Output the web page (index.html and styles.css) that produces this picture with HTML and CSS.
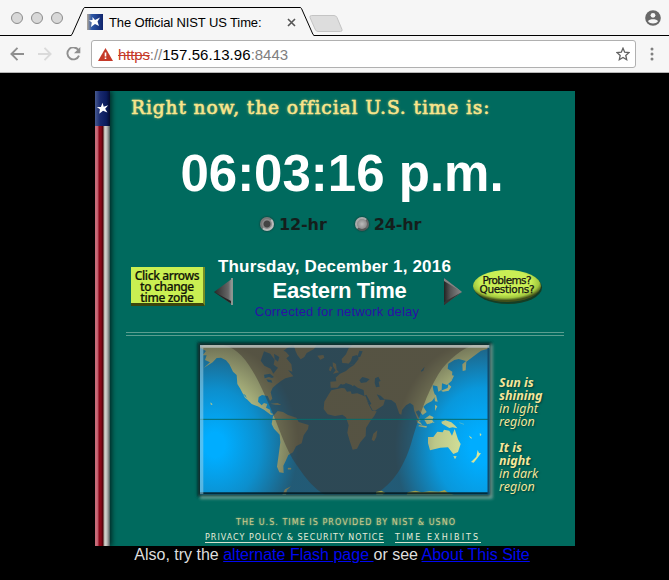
FILE: index.html
```html
<!DOCTYPE html>
<html lang="en">
<head>
<meta charset="utf-8">
<title>The Official NIST US Time:</title>
<link rel="stylesheet" href="styles.css">
</head>
<body>
<header class="browser">
  <div class="tabstrip">
    <div class="lights"><i></i><i></i><i></i></div>
    <div class="tab">
      <svg class="tab-shape" width="243" height="36" viewBox="0 0 243 36"><path d="M0 35.500L1 35L12.500 8.500Q13 7.500 14 7.500H229Q230 7.500 230.500 8.500L242 35L243 35.500V36H0Z" fill="#f6f6f6"/><path d="M0 35.300L1 34.500L12.500 8.500Q13 7.500 14 7.500H229Q230 7.500 230.500 8.500L242 34.500L243 35.300" fill="none" stroke="#000"/></svg>
      <div class="tab-content">
        <svg class="favicon" width="16" height="16" viewBox="0 0 16 16"><defs><linearGradient id="fav"><stop offset="0" stop-color="#b3a897"/><stop offset=".3" stop-color="#2c57a8"/><stop offset="1" stop-color="#10256d"/></linearGradient></defs><path fill="url(#fav)" d="M0 0h16v16H0z"/><path fill="#fff" d="M5.500 3l2.500 3 5-2.500-2.500 4L12 12l-4-2-4 3 .7-4.500L2 6.300l3.500-.2z"/></svg>
        <span class="tab-title">The Official NIST US Time:</span>
        <svg class="close" width="9" height="9" viewBox="0 0 9 9"><path d="M1 1l7 7M8 1L1 8" stroke="#555" stroke-width="1.600"/></svg>
      </div>
    </div>
    <svg class="newtab" width="34" height="17" viewBox="0 0 34 17"><path d="M2.500.5H25Q27 .5 28 2.500L33 14.500Q33.500 16.500 31.500 16.500H9Q7 16.500 6 14L1 2.500Q.5.500 2.500.5Z" fill="#ddd" stroke="#c4c4c4"/></svg>
    <svg class="person" width="16" height="16" viewBox="0 0 16 16"><circle cx="8" cy="8" r="7.800" fill="#686868"/><circle cx="8" cy="5.300" r="2.400" fill="#f6f6f6"/><path d="M3 11.200C4.500 8.700 11.500 8.700 13 11.200 11 14.200 5 14.200 3 11.200" fill="#f6f6f6"/></svg>
  </div>
  <div class="toolbar">
    <svg width="14" height="14" viewBox="0 0 14 14" fill="none" stroke="#8f8f8f" stroke-width="1.900"><path d="M14 7H1.500M7.500.8L1.400 7l6.100 6.200"/></svg>
    <svg width="14" height="14" viewBox="0 0 14 14" fill="none" stroke="#dadada" stroke-width="1.900"><path d="M0 7h12.500M6.500.8L12.600 7l-6.100 6.200"/></svg>
    <svg width="15" height="14" viewBox="0 0 15 14"><path d="M12.500 3.200A6 6 0 1 0 13 8.600" fill="none" stroke="#8f8f8f" stroke-width="1.900"/><path d="M14.300 0v6.300H8z" fill="#8f8f8f"/></svg>
    <div class="address">
      <svg class="warn" width="15" height="13" viewBox="0 0 15 13"><path d="M7.500 0L15 13H0z" fill="#c53929"/><path d="M6.700 4.500h1.600v4H6.700zM6.700 9.500h1.600V11H6.700z" fill="#fff"/></svg>
      <span class="url"><s>https</s>://<b>157.56.13.96</b>:8443</span>
      <svg class="star" width="14" height="14" viewBox="0 0 14 14"><path d="M7 1.200l1.700 4 4.300.4-3.200 2.800.9 4.300L7 10.500l-3.700 2.200.9-4.300L1 5.600l4.300-.4z" fill="none" stroke="#626262" stroke-width="1.300"/></svg>
    </div>
    <svg class="dots" width="4" height="14" viewBox="0 0 4 14" fill="#808080"><circle cx="2" cy="2" r="1.500"/><circle cx="2" cy="7" r="1.500"/><circle cx="2" cy="12" r="1.500"/></svg>
  </div>
</header>

<main class="panel">
  <div class="flag"><div class="canton"><svg width="13" height="13" viewBox="0 0 16 16"><path fill="#fff" d="M8 1l1.500 4.800L15 4l-3.700 4.200L14 13l-5.300-2.200L4 14.500l.8-5.500L1 6l5 .2z"/></svg></div><div class="stripes"></div></div>
  <div class="content">
    <h1>Right now, the official U.S. time is:</h1>
    <div class="clock">06:03:16 p.m.</div>
    <div class="modes">
      <span class="mode"><i class="radio on"></i>12-hr</span>
      <span class="mode"><i class="radio"></i>24-hr</span>
    </div>
    <div class="zone">
      <div class="hint">Click arrows<br>to change<br>time zone</div>
      <svg class="arrow prev" width="21" height="29" viewBox="0 0 21 29"><defs><linearGradient id="ar1"><stop offset="0" stop-color="#282828"/><stop offset=".75" stop-color="#666"/><stop offset="1" stop-color="#aaa"/></linearGradient></defs><path d="M20 1L1 15l19 13z" fill="url(#ar1)"/><path d="M1 15l19 13v-3z" fill="#242424"/><path d="M19 1v27" stroke="#8c9590" stroke-width="2"/></svg>
      <div class="when"><div class="date">Thursday, December 1, 2016</div><div class="tz">Eastern Time</div><div class="delay">Corrected for network delay</div></div>
      <svg class="arrow next" width="21" height="29" viewBox="0 0 21 29"><defs><linearGradient id="ar2"><stop offset="0" stop-color="#222"/><stop offset=".35" stop-color="#555"/><stop offset="1" stop-color="#8b8b8b"/></linearGradient></defs><path d="M1 1l18 14L1 28z" fill="url(#ar2)"/><path d="M1 1l18 14L1 4z" fill="#858585"/><path d="M1 28l18-13L1 25z" fill="#333"/></svg>
      <svg class="help" width="72" height="38" viewBox="0 0 72 38"><defs><radialGradient id="pill" cx=".48" cy=".38" r=".57"><stop offset=".65" stop-color="#c9ef55"/><stop offset=".86" stop-color="#a2c83e"/><stop offset="1" stop-color="#42501a"/></radialGradient></defs><ellipse cx="36" cy="18.500" rx="34" ry="16.500" fill="#153d24"/><ellipse cx="35" cy="17" rx="34" ry="16" fill="url(#pill)"/><g class="help-text"><text x="35" y="15" textLength="49">Problems?</text><text x="35" y="24" textLength="55">Questions?</text></g></svg>
    </div>
    <hr>
    <div class="daylight">
      <svg class="map" width="310" height="170" viewBox="0 0 930 510">
        <defs>
          <clipPath id="frame"><path d="M30 30H898V478H30z"/></clipPath>
          <filter id="edge" x="-.1" y="-.1" width="1.200" height="1.200"><feGaussianBlur stdDeviation="4"/></filter>
          <radialGradient id="west" gradientUnits="userSpaceOnUse" cx="0" cy="0" r="1" gradientTransform="translate(75 330) scale(250 305)"><stop offset=".12" stop-color="#34302f" stop-opacity="0"/><stop offset=".55" stop-color="#34302f" stop-opacity=".24"/><stop offset="1" stop-color="#34302f" stop-opacity=".66"/></radialGradient>
          <radialGradient id="east" gradientUnits="userSpaceOnUse" cx="0" cy="0" r="1" gradientTransform="translate(880 335) scale(265 320)"><stop offset=".15" stop-color="#34302f" stop-opacity="0"/><stop offset=".55" stop-color="#34302f" stop-opacity=".17"/><stop offset="1" stop-color="#34302f" stop-opacity=".66"/></radialGradient>
          <path id="night" d="M100 30C165 42 205 135 240 215C268 280 285 340 320 390C350 435 375 462 405 480H548C600 458 640 400 662 330C685 252 710 175 745 118C775 70 820 40 850 30Z"/>
        </defs>
        <path d="M22 22H906V485H22z" fill="#082a29" filter="url(#edge)"/>
        <path d="M30 487H904V28" fill="none" stroke="#8ab5aa" stroke-width="8" opacity=".85" filter="url(#edge)"/>
        <g clip-path="url(#frame)">
          <path d="M30 30H900V480H30z" fill="#00adff"/>
          <g fill="#d8e69b">
            <path d="M30 38L42 30H380L372 42L350 54L343 66L332 73L322 60L315 44L298 38L285 48L298 62L289 70L304 88L307 110L294 105L310 124L286 130L274 137L260 148L248 158L242 172L247 191L240 198L233 183L216 180L206 186L204 200L215 211L222 204L232 207L228 218L240 224L242 234L252 238L243 240L222 224L203 214L185 207L173 195L166 180L159 176L178 199L165 188L150 160L142 147L140 120L129 110L118 88L108 76L93 68L80 69L68 82L41 99L60 82L45 75L50 61L38 61L48 48Z"/>
            <path d="M249 244L263 228L279 231L294 240L319 248L326 261L356 270L354 282L341 301L335 325L318 334L309 352L295 360L287 378L280 392L281 414L268 412L261 395L266 359L271 322L269 299L252 281L245 267Z"/>
            <path d="M424 166L455 159L479 161L485 177L502 175L517 181L527 185L535 207L546 227L560 229L553 242L541 258L528 279L527 303L511 322L501 341L488 344L479 317L472 293L476 271L468 247L457 239L435 243L413 238L401 222L403 200L415 180ZM550 296L562 286L559 306L552 319L545 314Z"/>
            <path d="M422 158L421 140L439 139L437 128L450 116L468 108L478 99L492 90L470 85L457 84L455 72L468 58L476 40L488 30H900V40L873 47L848 66L829 80L827 106L818 108L817 88L828 78L806 72L793 75L775 86L773 101L787 110L785 137L771 150L756 145L755 164L745 170L742 154L728 151L730 166L736 184L726 198L709 207L700 215L710 231L698 240L686 226L677 230L692 259L684 255L673 229L670 211L660 204L648 211L636 225L634 239L628 236L617 205L604 195L583 193L572 182L560 178L570 195L585 194L580 211L555 227L548 226L533 199L523 181L521 166L492 162L485 150L465 143L477 164L466 157L453 146L442 158Z"/>
            <path d="M428 82l10 5 2 17 7 8-18 4 8-10-8-12zM420 94l7 3-5 12-5-3zM382 62l18-2 3 8-12 6zM242 206l21-2 11 6-18-1zM269 39l15 3-10 9z"/>
            <path d="M714 306L730 306L742 290L758 292L762 284L778 287L786 302L794 282L804 313L812 327L804 351L790 357L774 337L751 338L720 346L714 325ZM790 363l10 1-5 9zM863 345l4 9 6 1-10 13-12 15-8-2 16-16zM754 260l12-4 18 6 12 10 6 8-14-3-10 2-22-13zM702 253l17-12 11 5-4 18-15 4zM678 251l14 12 5 8-15-8zM687 270l24 4-2 4-24-4zM719 249l12-2-6 8 9 9-13-4-4 9zM732 178l6 2 5 20-8-1zM735 209l7 5-7 14zM784 120l8 2-8 17zM775 147l9 8-8 12-17 3-6-3 20-8z"/>
            <path d="M277 479l8-16 18-9-12 11-3 14z"/>
            <path d="M62 203l5 5-4 1zM294 399h9v4h-9zM808 263l14 5M838 303l8 7-5-1zM870 295l4 5-4 2zM718 260l2 2z" stroke="#d8e69b"/>
          </g>
          <g fill="#00adff">
            <path d="M222 49l19 7 13 18-3 15 13 9-14 18-8-15-19-9-11-15zM222 119l18-3 12 10-6 3-9-3-13 4zM229 133l15 2 3 8-13-2zM310 30l6 14-14 8-22-4 12-10zM252 56l16 10-4 14-10-8zM487 64l14-4 5 12-14 18-17-3 8-10zM508 47l10 2-7 16-10 4zM508 136l9-10 12 3 10 4-10 9-16 2zM555 130l10-5 7 13-6 2 3 15-11 2-4-13zM693 107l11-12-4 12-7 3z"/>
            <path d="M452 157l11 1 8 12 17-2 8 5 15 2 10-10-18-7-10-7-15 6-10-11-13 3zM525 181l4-2 15 27-5 5z"/>
          </g>
          <path d="M30 30H462V480H30z" fill="url(#west)"/>
          <path d="M462 30H900V480H462z" fill="url(#east)"/>
          <use href="#night" fill="#3c322f" opacity=".45"/>
          <path d="M558 471l16-4 12 6-9 7h-18zM653 472l23-5 19 5 24-3 28 1 17-5 8 7 20 8H650z" fill="#9c9d4a"/>
          <path d="M30 253H898" stroke="#076d6d" stroke-width="3"/>
          <path d="M30 472H898V478H30z" fill="#03171d" opacity=".85"/>
          <path d="M896 30V478" stroke="#124b6b" stroke-width="7"/>
          <path d="M30 30H898V38H30z" fill="#c5cdce" opacity=".75"/>
          <path d="M30 38H40V478H30z" fill="#a5d5ea" opacity=".5"/>
        </g>
      </svg>
      <div class="legend"><p><b>Sun is<br>shining</b><br>in light<br>region</p><p><b>It is<br>night</b><br>in dark<br>region</p></div>
    </div>
    <div class="credit">THE U.S. TIME IS PROVIDED BY NIST &amp; USNO</div>
    <nav class="links"><a class="privacy">PRIVACY POLICY &amp; SECURITY NOTICE</a><a class="exhibits">TIME EXHIBITS</a></nav>
  </div>
</main>
<p class="also">Also, try the <a>alternate Flash page </a>or see <a>About This Site</a></p>
</body>
</html>
```
FILE: styles.css
```css
* { box-sizing: border-box; }
body { margin: 0; width: 669px; height: 580px; overflow: hidden; background: #000; font-family: "Liberation Sans", Arial, sans-serif; }
svg { display: block; flex: none; }

/* Browser window */
.browser { height: 73px; background: #f6f6f6; border-bottom: 1px solid #b5b5b5; }
.tabstrip { height: 36px; display: flex; align-items: flex-start; border-bottom: 1px solid #000; }
.lights { display: flex; gap: 8px; padding: 12px 0 0 11px; width: 71px; }
.lights i { width: 12px; height: 12px; border: 1px solid #8c8c8c; border-radius: 50%; background: #d8d8d8; }
.tab { display: grid; width: 243px; height: 36px; }
.tab > * { grid-area: 1 / 1; }
.tab-content { display: flex; align-items: center; padding: 8px 0 0 16px; height: 36px; }
.tab-title { width: 177px; margin-left: 6px; font-size: 13px; white-space: nowrap; color: #000; letter-spacing: -.12px; }
.close { margin-left: 1px; }
.newtab { margin: 15px 0 0 -5px; }
.person { margin: 10px 8px 0 auto; }
.toolbar { height: 36px; display: flex; align-items: center; padding: 0 15px 0 10px; }
.toolbar > svg { margin-right: 14px; }
.toolbar > svg:nth-of-type(3) { margin-right: 10px; }
.address { flex: 1; height: 28px; display: flex; align-items: center; border: 1px solid #b0b0b0; border-radius: 3px; background: #fff; padding: 0 5px 0 6px; }
.url { margin-left: 5px; flex: 1; font-size: 15px; color: #808080; white-space: nowrap; letter-spacing: -.05px; }
.url s { color: #c53929; letter-spacing: -.15px; }
.url b { color: #000; font-weight: normal; letter-spacing: .08px; }
.toolbar > .dots { margin: 0 0 0 14px; }

/* Clock panel */
.panel { width: 480px; height: 455px; margin: 18px 0 0 95px; background: #006a5e; display: grid; grid-template-columns: 15px 1fr; }
.flag { box-shadow: 2px 0 5px #002b26; clip-path: inset(0 -8px 0 0); }
.canton { height: 35px; background: linear-gradient(90deg, #46598f, #18296e 35%, #0b1b5c 75%, #040b2c); display: flex; align-items: center; justify-content: center; }
.stripes { height: 420px; background: linear-gradient(90deg, #c76b79 0 2px, #bd5262 3px, #8c0718 4px 6px, #4a0008 8px, #a9a399 9px, #d0cfc9 10px 11px, #999 13px, #405450 15px); }
.content { display: flex; flex-direction: column; }
h1 { margin: 0; padding: 4px 0 0 21px; height: 46px; font: 18.500px/26px "DejaVu Serif", serif; letter-spacing: .95px; -webkit-text-stroke: .6px #f8e58c; color: #f8e58c; text-shadow: 0 0 3px #a7b16c; white-space: nowrap; }
.clock { height: 75px; text-align: center; font-size: 51px; line-height: 73px; font-weight: bold; color: #fff; padding-right: 1px; }
.modes { height: 24px; display: flex; gap: 28px; padding-left: 150px; }
.mode { display: flex; align-items: center; gap: 5px; font: bold 16px "DejaVu Sans", sans-serif; letter-spacing: -.1px; color: #141e1c; }
.radio { width: 14px; height: 14px; border-radius: 50%; border: 2px solid #aaa; border-color: #aaa #666 #555 #aaa; background: radial-gradient(#bbb, #777); box-shadow: 0 0 2px #222; }
.radio.on { background: radial-gradient(#444 0 3px, #8a8a8a 4px); border-color: #777 #bbb #bbb #777; }
.zone { height: 95px; padding: 20px 0 0 21px; display: flex; align-items: flex-start; }
.hint { width: 74px; height: 39px; margin-top: 11px; padding-top: 3px; border: solid; border-width: 0 2px 3px 0; border-color: #c5e94f #758e25 #3c460e #aaa; background: #caef52; text-align: center; font: 500 12px/11px "Noto Sans", sans-serif; letter-spacing: -.38px; color: #101407; -webkit-text-stroke: .2px #101407; white-space: nowrap; }
.arrow { margin-top: 21px; }
.prev { margin-left: 8px; }
.when { width: 209px; text-align: center; white-space: nowrap; color: #fff; display: flex; flex-direction: column; align-items: center; }
.date { margin-left: -8px; font-weight: bold; font-size: 17px; line-height: 21px; letter-spacing: .18px; }
.tz { margin-left: 2px; font-weight: bold; font-size: 22px; line-height: 28px; letter-spacing: -.33px; }
.delay { margin-left: -3px; color: #2b10a5; font-size: 13px; line-height: 14px; letter-spacing: .17px; }
.help { margin: 13px 0 0 8px; }
.help-text { font: 500 10.500px "DejaVu Sans", sans-serif; text-anchor: middle; fill: #111; stroke: #111; stroke-width: .25px; }
hr { width: 438px; height: 4px; margin: 1px 0 0 16px; border: solid #5b9e90; border-width: 1px 0; }
.daylight { display: flex; height: 180px; padding-left: 80px; }
.map { margin-top: -1px; }
.legend { margin: 40px 0 0 -1px; font: italic 12.500px/13px "Noto Sans", sans-serif; color: #f4e69a; text-shadow: 1px 1px 2px #023b34; }
.legend p { margin: 0 0 13px; }
.credit { padding-left: 126px; height: 14px; font: 8px/14px "DejaVu Sans", sans-serif; color: #c6c98b; letter-spacing: 1.040px; text-shadow: 0 0 2px #a1b07a; white-space: nowrap; }
.links { display: flex; gap: 11px; padding-left: 95px; margin-top: 3px; font: 8px/9px "DejaVu Sans", sans-serif; color: #e6edda; white-space: nowrap; }
.links a { border-bottom: 1px solid #d6e4cf; }
.privacy { width: 179px; letter-spacing: 1px; }
.exhibits { width: 86px; letter-spacing: 2.050px; }
.also { margin: 0; padding-right: 5px; text-align: center; font-size: 16px; line-height: 18px; color: #dedede; white-space: nowrap; }
.also a { color: #0008f0; text-decoration: underline; }
```
